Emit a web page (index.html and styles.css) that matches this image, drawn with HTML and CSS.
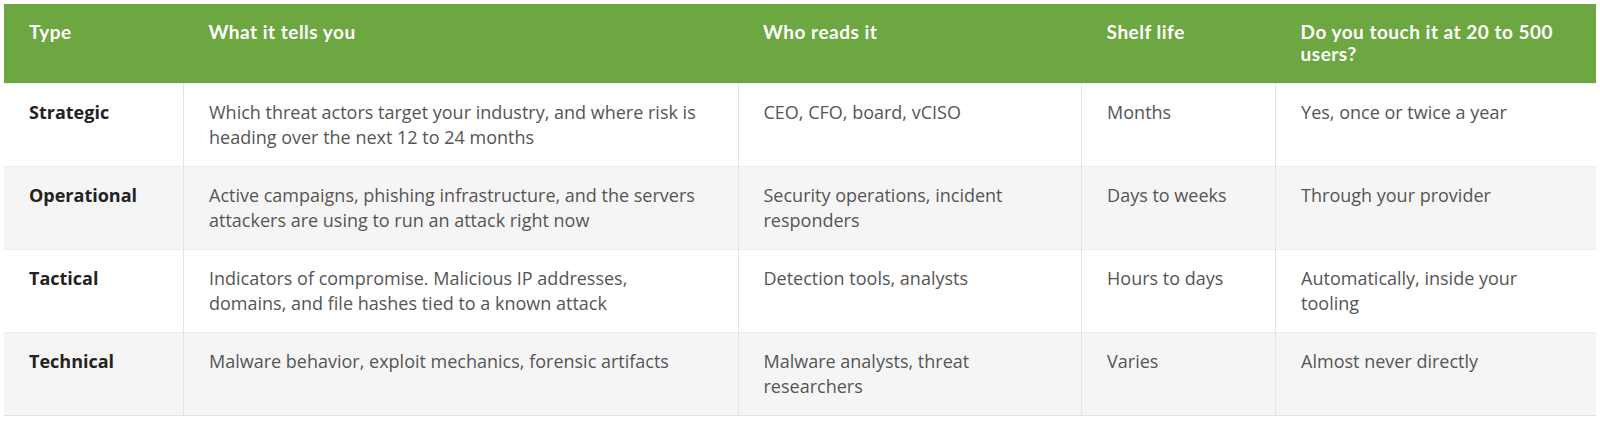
FILE: index.html
```html
<!DOCTYPE html>
<html lang="en">
<head>
<meta charset="utf-8">
<title>Threat intelligence types</title>
<link rel="stylesheet" href="styles.css">
</head>
<body>
<table class="intel">
  <colgroup>
    <col class="c1"><col class="c2"><col class="c3"><col class="c4"><col class="c5">
  </colgroup>
  <thead>
    <tr>
      <th>Type</th>
      <th>What it tells you</th>
      <th>Who reads it</th>
      <th>Shelf life</th>
      <th>Do you touch it at 20 to 500 users?</th>
    </tr>
  </thead>
  <tbody>
    <tr>
      <td class="type">Strategic</td>
      <td>Which threat actors target your industry, and where risk is heading over the next 12 to 24 months</td>
      <td>CEO, CFO, board, vCISO</td>
      <td>Months</td>
      <td>Yes, once or twice a year</td>
    </tr>
    <tr>
      <td class="type">Operational</td>
      <td>Active campaigns, phishing infrastructure, and the servers attackers are using to run an attack right now</td>
      <td>Security operations, incident responders</td>
      <td>Days to weeks</td>
      <td>Through your provider</td>
    </tr>
    <tr>
      <td class="type">Tactical</td>
      <td>Indicators of compromise. Malicious IP addresses, domains, and file hashes tied to a known attack</td>
      <td>Detection tools, analysts</td>
      <td>Hours to days</td>
      <td>Automatically, inside your tooling</td>
    </tr>
    <tr>
      <td class="type">Technical</td>
      <td>Malware behavior, exploit mechanics, forensic artifacts</td>
      <td>Malware analysts, threat researchers</td>
      <td>Varies</td>
      <td>Almost never directly</td>
    </tr>
  </tbody>
</table>
</body>
</html>
```

FILE: styles.css
```css
html, body {
  margin: 0;
  padding: 0;
  background: #ffffff;
}

body {
  padding: 4px;
  font-family: "Open Sans", "Noto Sans", sans-serif;
}

.intel {
  width: 1592px;
  border-collapse: collapse;
  table-layout: fixed;
}

.c1 { width: 179.5px; }
.c2 { width: 554.5px; }
.c3 { width: 343.6px; }
.c4 { width: 194px; }
.c5 { width: 320.4px; }

.intel th {
  background: #6ca741;
  color: #ffffff;
  font-family: "Lato", "Open Sans", sans-serif;
  font-weight: 700;
  font-size: 19px;
  letter-spacing: 0.5px;
  line-height: 22px;
  text-align: left;
  vertical-align: top;
  padding: 17px 24px 18px 25px;
}

.intel td {
  color: #555555;
  font-size: 18px;
  line-height: 25px;
  vertical-align: top;
  padding: 16px 30px 16px 25px;
  border-top: 1px solid #ececec;
  border-left: 1px solid #e4e4e4;
}

.intel td:first-child {
  border-left: none;
}

.intel tbody tr:nth-child(even) td {
  background: #f5f5f5;
}

.intel tbody tr:last-child td {
  border-bottom: 1px solid #e2e2e2;
}

.intel td.type {
  color: #222222;
  font-weight: 700;
}
```
